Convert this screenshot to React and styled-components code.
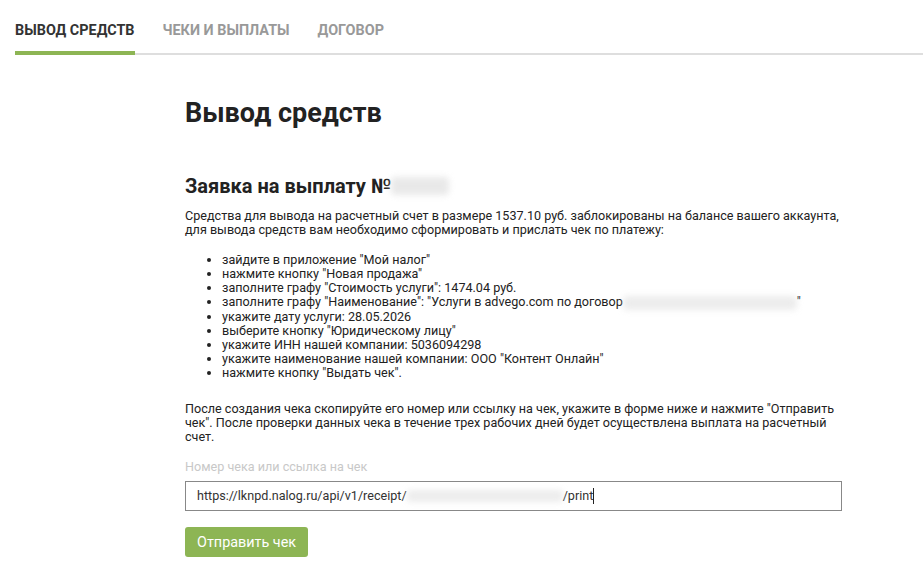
import React, { useState } from 'react';
import styled, { createGlobalStyle } from 'styled-components';

const GlobalStyle = createGlobalStyle`
  body {
    margin: 0;
    background: #fff;
    font-family: Roboto, "Liberation Sans", Arial, sans-serif;
    color: #222;
  }
`;

const S = {
  Page: styled.div`
    width: 923px;
    min-height: 575px;
  `,
  Tabs: styled.nav`
    display: flex;
    gap: 28px;
    margin-left: 15px;
    border-bottom: 2px solid #dedede;
  `,
  Tab: styled.div`
    position: relative;
    padding: 23px 0 14px;
    font-size: 14.4px;
    font-weight: 700;
    line-height: 16px;
    text-transform: uppercase;
    color: ${(p) => (p.$active ? '#333' : '#999')};

    &::after {
      content: '';
      display: ${(p) => (p.$active ? 'block' : 'none')};
      position: absolute;
      left: 0;
      right: 0;
      bottom: -2px;
      height: 4px;
      background: #8db554;
    }
  `,
  Content: styled.main`
    width: 660px;
    margin-left: 185px;
    padding-top: 42px;
    font-size: 12.6px;
    line-height: 14px;
  `,
  Title: styled.h1`
    margin: 0 0 45px;
    font-size: 27px;
    line-height: 32px;
    font-weight: 700;
  `,
  Subtitle: styled.h2`
    margin: 0 0 11px;
    font-size: 20px;
    line-height: 24px;
    font-weight: 700;
    display: flex;
    align-items: center;
  `,
  Text: styled.p`
    margin: 0 0 16px;
  `,
  Steps: styled.ul`
    margin: 0 0 22px;
    padding-left: 37px;
    line-height: 14.1px;
  `,
  Hidden: styled.span`
    display: inline-block;
    vertical-align: middle;
    width: ${(p) => p.$w}px;
    height: ${(p) => p.$h || 12}px;
    background: #dadada;
    border-radius: 4px;
    filter: blur(3px);
    opacity: ${(p) => p.$o || 0.8};
  `,
  Label: styled.label`
    display: block;
    margin: 16px 0 7px;
    color: #c8c8c8;
  `,
  Field: styled.div`
    display: flex;
    align-items: center;
    width: 657px;
    height: 30px;
    box-sizing: border-box;
    padding: 0 11px;
    border: 1px solid #888;
    color: #333;
  `,
  Caret: styled.span`
    display: inline-block;
    width: 1px;
    height: 16px;
    background: #222;
  `,
  Button: styled.button`
    margin-top: 16px;
    height: 30px;
    padding: 0 12px;
    border: 0;
    border-radius: 3px;
    background: #8db554;
    color: #fff;
    font-family: inherit;
    font-size: 14.4px;
    cursor: pointer;
  `,
};

const tabs = ['Вывод средств', 'Чеки и выплаты', 'Договор'];

const App = () => {
  const [activeTab, setActiveTab] = useState(0);

  return (
    <S.Page>
      <GlobalStyle />
      <S.Tabs>
        {tabs.map((tab, i) => (
          <S.Tab key={tab} $active={i === activeTab} onClick={() => setActiveTab(i)}>
            {tab}
          </S.Tab>
        ))}
      </S.Tabs>
      <S.Content>
        <S.Title>Вывод средств</S.Title>
        <S.Subtitle>
          Заявка на выплату №<S.Hidden $w={58} $h={18} $o={0.6} />
        </S.Subtitle>
        <S.Text>
          Средства для вывода на расчетный счет в размере 1537.10 руб. заблокированы на балансе вашего аккаунта,
          для вывода средств вам необходимо сформировать и прислать чек по платежу:
        </S.Text>
        <S.Steps>
          <li>зайдите в приложение "Мой налог"</li>
          <li>нажмите кнопку "Новая продажа"</li>
          <li>заполните графу "Стоимость услуги": 1474.04 руб.</li>
          <li>
            заполните графу "Наименование": "Услуги в advego.com по договор
            <S.Hidden $w={174} $h={14} $o={0.5} />"
          </li>
          <li>укажите дату услуги: 28.05.2026</li>
          <li>выберите кнопку "Юридическому лицу"</li>
          <li>укажите ИНН нашей компании: 5036094298</li>
          <li>укажите наименование нашей компании: ООО "Контент Онлайн"</li>
          <li>нажмите кнопку "Выдать чек".</li>
        </S.Steps>
        <S.Text>
          После создания чека скопируйте его номер или ссылку на чек, укажите в форме ниже и нажмите "Отправить
          чек". После проверки данных чека в течение трех рабочих дней будет осуществлена выплата на расчетный
          счет.
        </S.Text>
        <S.Label>Номер чека или ссылка на чек</S.Label>
        <S.Field>
          https://lknpd.nalog.ru/api/v1/receipt/
          <S.Hidden $w={156} $h={12} $o={0.5} />
          /print
          <S.Caret />
        </S.Field>
        <S.Button>Отправить чек</S.Button>
      </S.Content>
    </S.Page>
  );
};

export default App;
